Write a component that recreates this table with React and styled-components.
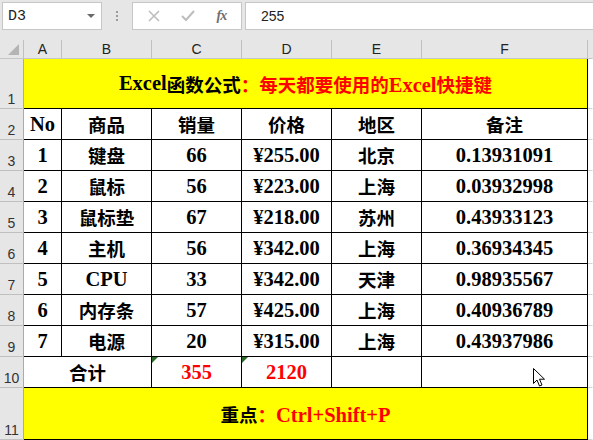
import React from "react";
import styled, { createGlobalStyle } from "styled-components";

const Global = createGlobalStyle`
  html, body { margin: 0; padding: 0; background: #ffffff; }
  body { width: 593px; height: 440px; overflow: hidden; }
  * { box-sizing: border-box; }
`;

const COLS = "24px 38px 90px 90px 90px 90px 166px 1fr";
const SERIF = `"Liberation Serif", "Noto Sans CJK SC", serif`;
const UI = `"Liberation Sans", "Noto Sans", sans-serif`;

const Page = styled.div`
  position: relative;
  width: 593px;
  height: 440px;
  background: #fff;
`;

const Toolbar = styled.div`
  height: 40px;
  background: #e6e6e6;
  display: flex;
  align-items: flex-start;
  padding: 2px 0 0 2px;
`;

const NameBox = styled.div`
  width: 100px;
  height: 28px;
  background: #fff;
  border: 1px solid #c6c6c6;
  display: flex;
  align-items: center;
  justify-content: space-between;
  padding: 0 6px 0 5px;
  font-family: "Liberation Mono", monospace;
  font-size: 15px;
  color: #222;
`;

const DropArrow = styled.span`
  width: 0;
  height: 0;
  border-left: 4px solid transparent;
  border-right: 4px solid transparent;
  border-top: 4px solid #6a6a6a;
`;

const Dots = styled.div`
  width: 30px;
  height: 28px;
  display: flex;
  flex-direction: column;
  align-items: center;
  justify-content: center;
  gap: 2px;
  span {
    width: 2px;
    height: 2px;
    background: #9a9a9a;
  }
`;

const FxBox = styled.div`
  width: 110px;
  height: 28px;
  background: #fff;
  border: 1px solid #c6c6c6;
  display: flex;
  align-items: center;
  justify-content: space-around;
  padding: 0 4px;
`;

const FxLabel = styled.span`
  font-family: "Liberation Serif", serif;
  font-style: italic;
  font-weight: bold;
  font-size: 14px;
  color: #707070;
  letter-spacing: -1px;
`;

const FormulaInput = styled.div`
  flex: 1;
  margin-left: 3px;
  height: 28px;
  background: #fff;
  border: 1px solid #c6c6c6;
  border-right: none;
  display: flex;
  align-items: center;
  padding-left: 15px;
  font-family: ${UI};
  font-size: 14px;
  color: #222;
`;

const Row = styled.div`
  display: grid;
  grid-template-columns: ${COLS};
  height: ${(p) => p.$h}px;
`;

const Corner = styled.div`
  background: #e6e6e6;
  border-right: 1px solid #c0c0c0;
  border-bottom: 1px solid #c6c6c6;
  display: flex;
  align-items: flex-end;
  justify-content: flex-end;
  padding: 0 4px 3px 0;
`;

const ColHead = styled.div`
  background: #e6e6e6;
  border-right: 1px solid ${(p) => (p.$last ? "transparent" : "#c0c0c0")};
  border-bottom: 1px solid #c6c6c6;
  display: flex;
  align-items: flex-end;
  justify-content: center;
  padding-bottom: 1px;
  font-family: ${UI};
  font-size: 14px;
  color: #222;
`;

const RowHead = styled.div`
  background: #e6e6e6;
  border-right: 1px solid #ababab;
  border-bottom: 1px solid #c0c0c0;
  display: flex;
  align-items: flex-end;
  justify-content: center;
  padding-bottom: 1px;
  font-family: ${UI};
  font-size: 14px;
  color: #333;
`;

const Cell = styled.div`
  position: relative;
  grid-column: span ${(p) => p.$span || 1};
  background: ${(p) => p.$bg || "#fff"};
  border-right: 1px solid ${(p) => (p.$open ? "transparent" : "#000")};
  border-bottom: 1px solid ${(p) => (p.$open ? "#d4d4d4" : "#000")};
  display: flex;
  align-items: center;
  justify-content: center;
  font-family: ${SERIF};
  font-weight: bold;
  font-size: 20.5px;
  color: ${(p) => p.$color || "#000"};
  white-space: nowrap;
`;

const Han = styled.span`
  font-family: "Noto Sans CJK SC", sans-serif;
  font-size: 18.5px;
  font-weight: 600;
`;

const Red = styled.span`
  color: #ff0000;
`;

const Flag = styled.span`
  position: absolute;
  top: 0;
  left: 0;
  width: 0;
  height: 0;
  border-top: 6px solid #2a6b2a;
  border-right: 6px solid transparent;
`;

const Pointer = styled.svg`
  position: absolute;
  left: 533px;
  top: 368px;
`;

function T({ children }) {
  const parts = String(children).split(/([\u3000-\u9fff\uff00-\uffef]+)/);
  return parts.map((p, i) =>
    /[\u3000-\u9fff\uff00-\uffef]/.test(p) ? <Han key={i}>{p}</Han> : p
  );
}

const data = [
  ["1", "键盘", "66", "¥255.00", "北京", "0.13931091"],
  ["2", "鼠标", "56", "¥223.00", "上海", "0.03932998"],
  ["3", "鼠标垫", "67", "¥218.00", "苏州", "0.43933123"],
  ["4", "主机", "56", "¥342.00", "上海", "0.36934345"],
  ["5", "CPU", "33", "¥342.00", "天津", "0.98935567"],
  ["6", "内存条", "57", "¥425.00", "上海", "0.40936789"],
  ["7", "电源", "20", "¥315.00", "上海", "0.43937986"],
];

export default function App() {
  return (
    <Page>
      <Global />
      <Toolbar>
        <NameBox>
          <span>D3</span>
          <DropArrow />
        </NameBox>
        <Dots>
          <span />
          <span />
          <span />
        </Dots>
        <FxBox>
          <svg width="12" height="12" viewBox="0 0 12 12">
            <path d="M1 1 L11 11 M11 1 L1 11" stroke="#bdbdbd" strokeWidth="1.6" fill="none" />
          </svg>
          <svg width="14" height="12" viewBox="0 0 14 12">
            <path d="M1 6 L5 10 L13 1" stroke="#bdbdbd" strokeWidth="2" fill="none" />
          </svg>
          <FxLabel>fx</FxLabel>
        </FxBox>
        <FormulaInput>255</FormulaInput>
      </Toolbar>

      <Row $h={19}>
        <Corner>
          <svg width="11" height="11" viewBox="0 0 11 11">
            <polygon points="11,0 11,11 0,11" fill="#b4b4b4" />
          </svg>
        </Corner>
        {["A", "B", "C", "D", "E", "F"].map((c) => (
          <ColHead key={c}>{c}</ColHead>
        ))}
        <ColHead $last />
      </Row>

      <Row $h={50}>
        <RowHead>1</RowHead>
        <Cell $span={6} $bg="#ffff00">
          Excel<T>函数公式</T>
          <Red>
            <T>：每天都要使用的</T>Excel<T>快捷键</T>
          </Red>
        </Cell>
        <Cell $open />
      </Row>

      <Row $h={31}>
        <RowHead>2</RowHead>
        {["No", "商品", "销量", "价格", "地区", "备注"].map((h) => (
          <Cell key={h}>
            <T>{h}</T>
          </Cell>
        ))}
        <Cell $open />
      </Row>

      {data.map((r, i) => (
        <Row $h={31} key={i}>
          <RowHead>{i + 3}</RowHead>
          {r.map((v, j) => (
            <Cell key={j}>
              <T>{v}</T>
            </Cell>
          ))}
          <Cell $open />
        </Row>
      ))}

      <Row $h={31}>
        <RowHead>10</RowHead>
        <Cell $span={2}>
          <T>合计</T>
        </Cell>
        <Cell $color="#ff0000">
          <Flag />
          355
        </Cell>
        <Cell $color="#ff0000">
          <Flag />
          2120
        </Cell>
        <Cell />
        <Cell />
        <Cell $open />
      </Row>

      <Row $h={52}>
        <RowHead>11</RowHead>
        <Cell $span={6} $bg="#ffff00">
          <T>重点</T>
          <Red>
            <T>：</T>Ctrl+Shift+P
          </Red>
        </Cell>
        <Cell $open />
      </Row>

      <Pointer width="13" height="20" viewBox="0 0 13 20">
        <path
          d="M0.5 0.5 L0.5 15.5 L4 12 L6.5 18 L9 17 L6.5 11.2 L11.5 11.2 Z"
          fill="#fff"
          stroke="#000"
          strokeWidth="1"
        />
      </Pointer>
    </Page>
  );
}
